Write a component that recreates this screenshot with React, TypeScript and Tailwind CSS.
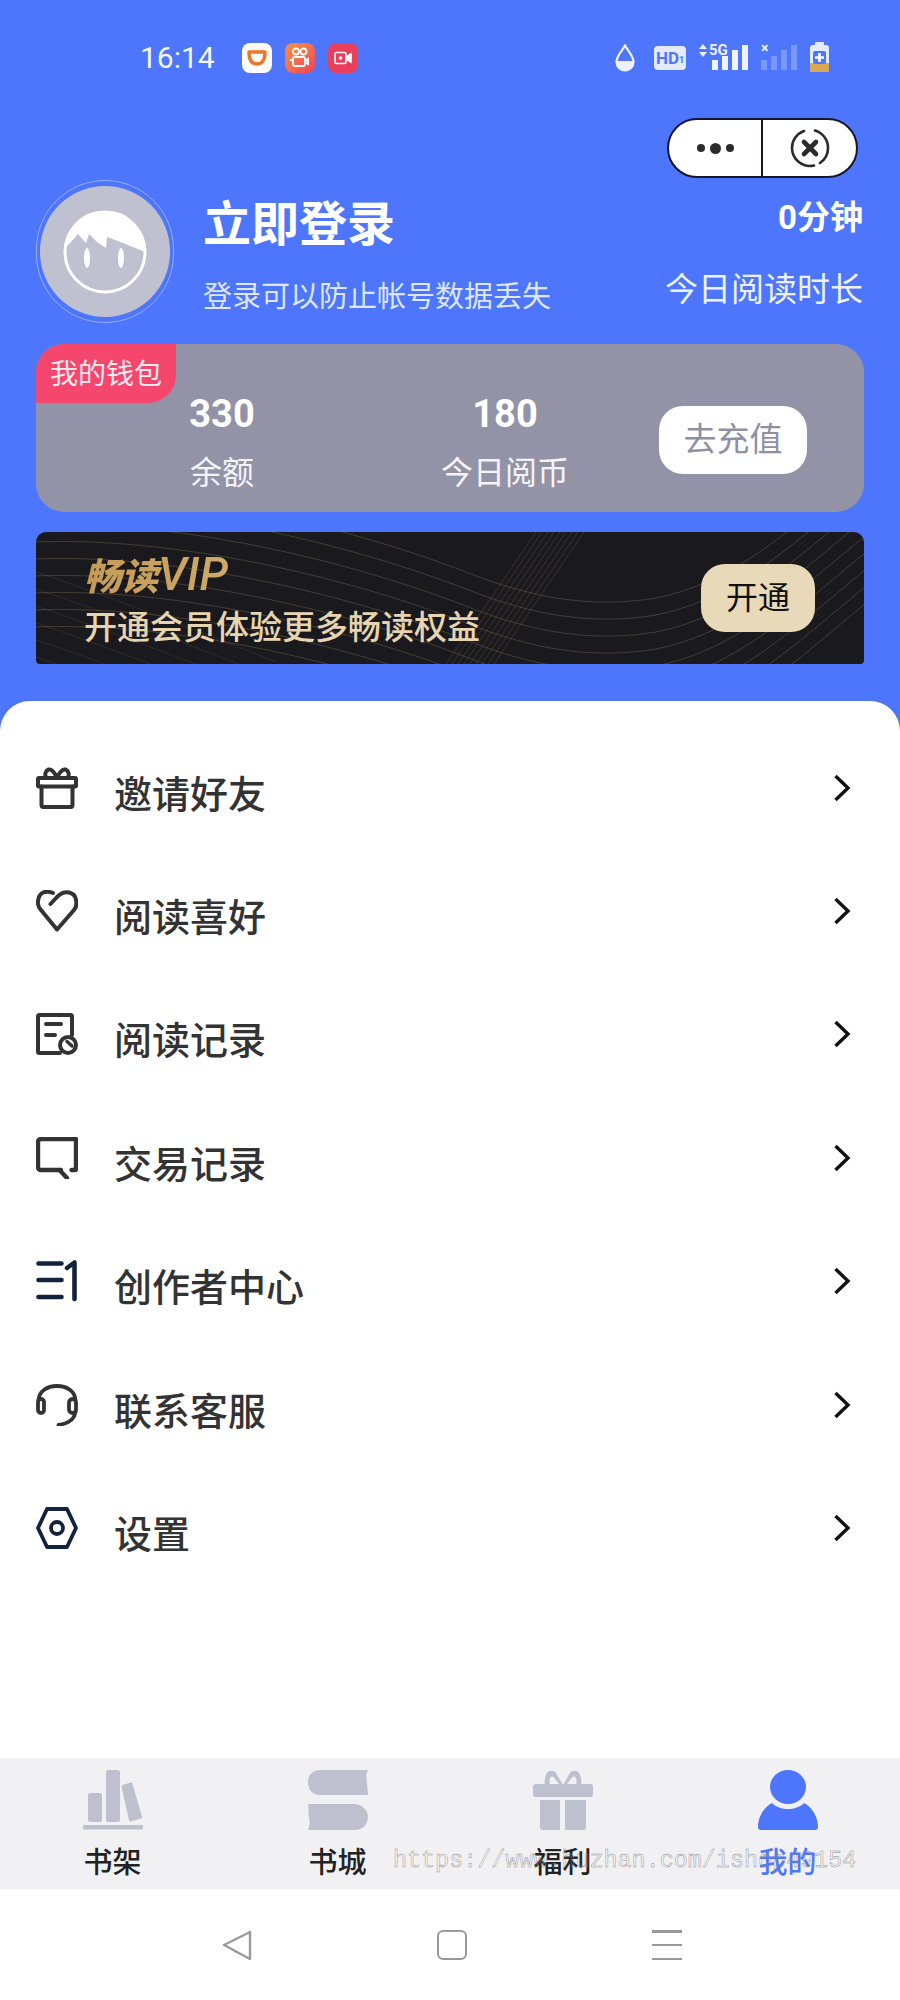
const tabs = [
  { label: "书架", icon: <ShelfIcon /> },
  { label: "书城", icon: <StoreIcon /> },
  { label: "福利", icon: <WelfareIcon /> },
  { label: "我的", icon: <MineIcon />, active: true },
];

const menu = [
  { label: "邀请好友", icon: <GiftIcon /> },
  { label: "阅读喜好", icon: <HeartIcon /> },
  { label: "阅读记录", icon: <RecordIcon /> },
  { label: "交易记录", icon: <ChatIcon /> },
  { label: "创作者中心", icon: <CreatorIcon /> },
  { label: "联系客服", icon: <HeadsetIcon /> },
  { label: "设置", icon: <SettingIcon /> },
];

function GiftIcon() {
  return (
    <svg width="42" height="42" viewBox="0 0 42 42" fill="none" stroke="#333" strokeWidth="4" strokeLinecap="round" strokeLinejoin="round">
      <rect x="2" y="11" width="38" height="8.500" rx="1" />
      <path d="M5.500 19.500V38a2 2 0 0 0 2 2h27a2 2 0 0 0 2-2V19.500" />
      <path d="M10 10.500c-1.500-3-.5-7 2.500-8 3-.8 6 3 8.500 8 2.500-5 5.500-8.800 8.500-8 3 1 4 5 2.500 8" />
    </svg>
  );
}

function HeartIcon() {
  return (
    <svg width="42" height="42" viewBox="0 0 42 42" fill="none" stroke="#333" strokeWidth="4" strokeLinecap="round" strokeLinejoin="round">
      <path d="M17 3C10 0 3 2 2 11c-.5 4 1 7 3 9l16 19.500L38 20c2-2 3-5 2-10C39 2 29-1 21 7l-6.500 7" />
    </svg>
  );
}

function RecordIcon() {
  return (
    <svg width="42" height="42" viewBox="0 0 42 42" fill="none" stroke="#333" strokeWidth="4" strokeLinecap="round" strokeLinejoin="round">
      <path d="M24 40H3.500A1.500 1.500 0 0 1 2 38.500v-35A1.500 1.500 0 0 1 3.500 2h31A1.500 1.500 0 0 1 36 3.500V22" />
      <path d="M10 11h15M10 22h9" />
      <circle cx="32" cy="32" r="8" fill="#fff" />
      <path d="M31 28.500 36 33" strokeWidth="3.400" />
    </svg>
  );
}

function ChatIcon() {
  return (
    <svg width="42" height="42" viewBox="0 0 42 42" fill="none" stroke="#333" strokeWidth="4.400" strokeLinecap="round" strokeLinejoin="round">
      <path d="M25 33H5a3 3 0 0 1-3-3V5a3 3 0 0 1 3-3h34.500a.5.500 0 0 1 .5.500V32a1 1 0 0 1-1 1h-3.500" />
      <path d="M23.500 33 31 41" />
    </svg>
  );
}

function CreatorIcon() {
  return (
    <svg width="42" height="42" viewBox="0 0 42 42" fill="none" stroke="#14233c" strokeWidth="4.600" strokeLinecap="round" strokeLinejoin="round">
      <path d="M2.500 3.500h23M2.500 20h23M2.500 37h23" />
      <path d="M31 8 38.500 2.500V39" />
    </svg>
  );
}

function HeadsetIcon() {
  return (
    <svg width="42" height="42" viewBox="0 0 42 42" fill="none" stroke="#333" strokeWidth="3.800" strokeLinecap="round" strokeLinejoin="round">
      <path d="M2.500 16C3 7.500 11 2 21 2s18 5.500 18.500 14" />
      <rect x="2" y="15" width="6" height="14" rx="3" />
      <rect x="33" y="15" width="7" height="14" rx="3.500" />
      <path d="M39.500 28c-1 7-7 11.500-17 13" />
    </svg>
  );
}

function SettingIcon() {
  return (
    <svg width="42" height="42" viewBox="0 0 42 42" fill="none" stroke="#14233c" strokeWidth="3.800" strokeLinecap="round" strokeLinejoin="round">
      <path d="M11 2h20l9 19-9 19H11L2 21 11 2Z" />
      <circle cx="21" cy="21" r="6" />
    </svg>
  );
}

function ShelfIcon() {
  return (
    <svg width="60" height="60" viewBox="0 0 60 60" fill="#bfc0cf">
      <rect x="0" y="55" width="60" height="4.500" rx="1" />
      <rect x="5" y="23" width="14" height="29" rx="2.500" />
      <rect x="23" y="0" width="14" height="52" rx="2.500" />
      <path d="M40 16.500 48 14l9.500 33-10 3-7.500-33.500Z" stroke="#bfc0cf" strokeWidth="3" strokeLinejoin="round" />
    </svg>
  );
}

function StoreIcon() {
  return (
    <svg width="60" height="60" viewBox="0 0 60 60" fill="#bfc0cf">
      <path d="M12 0h48c-2 4-2 8-1 12l1 13H12C4 25 0 19 0 12S5 0 12 0Z" />
      <path d="M0 34h46c8 0 14 6 14 13s-5 13-13 13H0c2-4 2-9 1-13s0-9-1-13Z" />
    </svg>
  );
}

function WelfareIcon() {
  return (
    <svg width="60" height="60" viewBox="0 0 60 60" fill="#bfc0cf">
      <path d="M30 15 23 3c-2-3-7-3-9 0s-3 9-2 12h5c-1-3-.5-7 1-8s3 0 4 2l5 6h6Zm0 0 7-12c2-3 7-3 9 0s3 9 2 12h-5c1-3 .5-7-1-8s-3 0-4 2l-5 6h-3Z" />
      <rect x="0" y="14" width="60" height="13" rx="3" />
      <path d="M7 30h20v30H10a3 3 0 0 1-3-3V30Z" />
      <path d="M32 30h21v27a3 3 0 0 1-3 3H32V30Z" />
    </svg>
  );
}

function MineIcon() {
  return (
    <svg width="60" height="60" viewBox="0 0 60 60" fill="#4d76fd">
      <ellipse cx="30" cy="17" rx="18" ry="17" />
      <path d="M14 33c4 4 10 6 16 6s12-2 16-6c8 4 14 14 14 24a3 3 0 0 1-3 3H3a3 3 0 0 1-3-3c0-10 6-20 14-24Z" />
    </svg>
  );
}

function Signal({ dim }: { dim?: boolean }) {
  const cls = dim ? "bg-white/25" : "bg-[#eef2ff]";
  return (
    <div className="flex h-[25px] items-end gap-[4px]">
      <div className={`h-[10px] w-[6px] ${cls}`} />
      <div className={`h-[14px] w-[6px] ${cls}`} />
      <div className={`h-[20px] w-[6px] ${cls}`} />
      <div className={`h-[25px] w-[6px] ${cls}`} />
    </div>
  );
}

function StatusBar() {
  return (
    <div className="flex h-[118px] items-start pt-[43px] pl-[140px] pr-[71px]">
      <span className="w-[78px] text-[30px] leading-[30px] text-[#f4f7ff]">16:14</span>
      <div className="ml-[24px] flex gap-[13px]">
        <div className="flex h-[30px] w-[30px] items-center justify-center rounded-[8px] bg-[#fdfcf8]">
          <svg width="20" height="16" viewBox="0 0 20 16" fill="none">
            <path d="M2 2h16c0 8-3 12-8 12S2 10 2 2Z" stroke="#e8782a" strokeWidth="3.400" strokeLinejoin="round" />
          </svg>
        </div>
        <div className="flex h-[30px] w-[30px] items-center justify-center rounded-[8px] bg-gradient-to-br from-[#f59236] to-[#ee3f5d]">
          <svg width="20" height="22" viewBox="0 0 20 22" fill="none" stroke="#fff" strokeWidth="1.800">
            <circle cx="6" cy="4.500" r="3" />
            <circle cx="13.500" cy="4.500" r="3" />
            <rect x="3" y="10" width="12" height="9" rx="2" />
            <path d="M15 14l3-2v5l-3-2M0 13h3" />
          </svg>
        </div>
        <div className="flex h-[30px] w-[30px] items-center justify-center rounded-[8px] bg-[#e93f5a]">
          <svg width="18" height="14" viewBox="0 0 18 14" fill="none" stroke="#fff" strokeWidth="1.600">
            <rect x="1" y="1.500" width="11" height="11" rx="1.500" />
            <path d="M12 6l5-3v8l-5-3" fill="#fff" />
            <circle cx="6.500" cy="7" r="1" fill="#fff" />
          </svg>
        </div>
      </div>
      <div className="ml-auto flex items-start">
        <svg width="20" height="28" viewBox="0 0 20 28" className="mt-[1px]">
          <path d="M10 1.500C7 7 1.500 12 1.500 18a8.500 8.500 0 0 0 17 0C18.500 12 13 7 10 1.500Z" fill="none" stroke="#eef2ff" strokeWidth="2.200" />
          <path d="M1.500 17h17a8.500 9.500 0 0 1-17 0Z" fill="#eef2ff" />
        </svg>
        <div className="ml-[19px] mt-[3px] flex h-[24px] w-[32px] items-center justify-center rounded-[4px] bg-[#e4eaff] text-[17px] leading-none font-bold text-[#4d76fd]">
          HD<span className="mt-[4px] text-[9px]">1</span>
        </div>
        <div className="relative ml-[13px] h-[27px] w-[49px]">
          <svg width="8" height="13" viewBox="0 0 8 13" className="absolute top-[1px] left-0" fill="#eef2ff">
            <path d="M4 0l4 5H0ZM4 13l4-5H0Z" />
          </svg>
          <span className="absolute top-[-1px] left-[10px] text-[15px] leading-[16px] font-bold text-[#eef2ff]">5G</span>
          <div className="absolute right-0 bottom-0">
            <Signal />
          </div>
        </div>
        <div className="relative ml-[13px] h-[27px] w-[36px]">
          <span className="absolute top-[-3px] left-0 text-[14px] leading-[16px] font-bold text-[#eef2ff]">×</span>
          <div className="absolute right-0 bottom-0">
            <Signal dim />
          </div>
        </div>
        <div className="relative ml-[13px] mt-[-1px] h-[30px] w-[19px]">
          <div className="mx-auto h-[3px] w-[9px] rounded-t-[1px] bg-[#e4eaff]" />
          <div className="flex h-[27px] w-[19px] flex-col justify-end overflow-hidden rounded-[3px] bg-[#e4eaff]">
            <div className="h-[9px] bg-[#d9a850]" />
          </div>
          <div className="absolute top-[9px] left-[3px] flex h-[13px] w-[13px] items-center justify-center rounded-[2px] bg-[#4d76fd]">
            <svg width="9" height="9" viewBox="0 0 9 9" fill="none" stroke="#fff" strokeWidth="2.600">
              <path d="M4.500 0v9M0 4.500h9" />
            </svg>
          </div>
        </div>
      </div>
    </div>
  );
}

function Capsule() {
  return (
    <div className="flex justify-end pr-[42px]">
      <div className="flex h-[60px] w-[191px] rounded-full border-2 border-[#16172e] bg-white">
        <div className="flex w-[94px] items-center justify-center gap-[5px] border-r-2 border-[#16172e]">
          <span className="h-[8px] w-[8px] rounded-full bg-[#2b2b2b]" />
          <span className="h-[11px] w-[11px] rounded-full bg-[#2b2b2b]" />
          <span className="h-[8px] w-[8px] rounded-full bg-[#2b2b2b]" />
        </div>
        <div className="flex flex-1 items-center justify-center">
          <svg width="40" height="40" viewBox="0 0 40 40" fill="none" stroke="#2b2b2b" strokeLinecap="round">
            <path d="M25 2.500A18 18 0 0 1 38 20a18 18 0 0 1-8 15M24 37.500A18 18 0 0 1 2 20 18 18 0 0 1 14 3" strokeWidth="2.600" />
            <path d="M14 14l12 12M26 14 14 26" strokeWidth="4.600" />
          </svg>
        </div>
      </div>
    </div>
  );
}

function Avatar() {
  return (
    <div className="flex h-[143px] w-[138px] items-center justify-center rounded-full border border-white/40">
      <div className="flex h-[131px] w-[130px] items-center justify-center rounded-full bg-[#bfc0d0]">
        <svg width="84" height="84" viewBox="0 0 84 84">
          <circle cx="42" cy="42" r="40" fill="none" stroke="#fff" strokeWidth="3" />
          <path d="M2 38C4 15 20 1 42 1s38 14 40 41L60 33 44 27l-1 11-9-6-8-8-3 9-8-9C10 30 6 34 2 38Z" fill="#fff" />
          <ellipse cx="24" cy="48" rx="3" ry="10" fill="#fff" />
          <ellipse cx="58" cy="48" rx="3" ry="10" fill="#fff" />
        </svg>
      </div>
    </div>
  );
}

function Profile() {
  return (
    <div className="mt-[2px] flex h-[144px] items-start pr-[37px] pl-[36px]">
      <Avatar />
      <div className="ml-[29px] flex flex-col">
        <span className="mt-[20px] text-[48px] leading-[50px] font-bold text-white">立即登录</span>
        <span className="mt-[31px] text-[29px] leading-[32px] text-[#dfe6ff]">登录可以防止帐号数据丢失</span>
      </div>
      <div className="ml-auto flex flex-col items-end text-white">
        <span className="mt-[18px] text-[33px] leading-[40px] font-bold">0分钟</span>
        <span className="mt-[32px] text-[33px] leading-[40px] text-[#eef2ff]">今日阅读时长</span>
      </div>
    </div>
  );
}

function Wallet() {
  return (
    <div className="relative mx-[36px] mt-[20px] flex h-[168px] items-center rounded-[28px] bg-[#9293a6]">
      <div className="absolute top-0 left-0 flex h-[59px] w-[140px] items-center justify-center rounded-tl-[28px] rounded-br-[28px] bg-[#f5476e] pt-[3px] text-[28px] leading-none text-[#fde9ee]">
        我的钱包
      </div>
      <div className="ml-[122px] flex w-[128px] flex-col items-center pt-[30px] text-white">
        <span className="text-[38px] leading-[46px] font-bold">330</span>
        <span className="mt-[14px] text-[32px] leading-[44px] text-[#f4f4f8]">余额</span>
      </div>
      <div className="ml-[127px] flex w-[184px] flex-col items-center pt-[30px] text-white">
        <span className="text-[38px] leading-[46px] font-bold">180</span>
        <span className="mt-[14px] text-[32px] leading-[44px] text-[#f4f4f8]">今日阅币</span>
      </div>
      <div className="mt-[24px] ml-[62px] flex h-[68px] w-[148px] items-center justify-center rounded-[24px] bg-white text-[33px] text-[#8f90a3]">
        去充值
      </div>
    </div>
  );
}

function VipLines() {
  const offsets = Array.from({ length: 9 }, (_, i) => i * 17);
  const band = Array.from({ length: 9 }, (_, i) => i * 6);
  return (
    <svg className="absolute inset-0" width="828" height="132" viewBox="0 0 828 132" fill="none" stroke="#b09a6c" strokeOpacity=".28" strokeWidth="1">
      {offsets.map((o) => (
        <path key={o} d={`M-20 ${o - 40}C120 ${o - 50} 300 ${o - 10} 430 ${o + 40}C500 ${o + 68} 560 ${o + 76} 620 ${o + 66}C690 ${o + 52} 740 ${o + 10} 800 ${o - 40}S860 ${o - 90} 900 ${o - 120}`} />
      ))}
      {offsets.map((o) => (
        <path key={`l${o}`} d={`M0 ${o + 40}C60 ${o + 60} 140 ${o + 90} 240 ${o + 130}`} strokeOpacity=".14" />
      ))}
      {band.map((o) => (
        <path key={`b${o}`} d={`M${500 + o} 0L${410 + o} 132`} strokeOpacity=".2" />
      ))}
    </svg>
  );
}

function VipBanner() {
  return (
    <div className="relative mx-[36px] mt-[20px] h-[132px] overflow-hidden rounded-t-[10px] rounded-b-[4px] bg-[#1a1a1e]">
      <VipLines />
      <div className="relative flex h-full items-start pr-[49px] pl-[48px]">
        <div className="flex flex-col">
          <span className="mt-[20px] bg-gradient-to-r from-[#c49a55] to-[#e2c58c] bg-clip-text text-[37px] leading-[44px] font-black text-transparent italic">
            畅读<span className="text-[46px] font-medium">VIP</span>
          </span>
          <span className="mt-[8px] text-[33px] leading-[40px] font-medium text-[#e6d5b0]">开通会员体验更多畅读权益</span>
        </div>
        <div className="mt-[32px] ml-auto flex h-[68px] w-[114px] items-center justify-center rounded-[24px] bg-[#e8d9b8] text-[32px] text-[#111]">
          开通
        </div>
      </div>
    </div>
  );
}

function Menu() {
  return (
    <div className="mt-[37px] flex-1 rounded-t-[30px] bg-white pt-[25px]">
      {menu.map((item) => (
        <div key={item.label} className="flex h-[123.4px] items-center pr-[49px] pl-[36px]">
          <div className="h-[42px] w-[42px]">{item.icon}</div>
          <span className="mt-[14px] ml-[36px] text-[38px] leading-[48px] font-medium text-[#333]">{item.label}</span>
          <svg width="18" height="28" viewBox="0 0 18 28" fill="none" stroke="#111" strokeWidth="3.400" className="ml-auto">
            <path d="M2.500 2 15 14 2.500 26" />
          </svg>
        </div>
      ))}
    </div>
  );
}

function TabBar() {
  return (
    <div className="relative grid h-[131px] grid-cols-4 bg-[#f1f1f3] pt-[12px]">
      {tabs.map((tab) => (
        <div key={tab.label} className="flex flex-col items-center">
          {tab.icon}
          <span className={`mt-[18px] text-[29px] leading-[30px] font-medium ${tab.active ? "text-[#4d76fd]" : "text-[#222]"}`}>{tab.label}</span>
        </div>
      ))}
      <span className="absolute top-[88px] left-[393px] font-['Liberation_Mono',monospace] text-[23.400px] leading-[30px] whitespace-nowrap text-transparent [-webkit-text-stroke:0.4px_#8a8a8a]">
        https://www.huzhan.com/ishop49154
      </span>
    </div>
  );
}

function SystemNav() {
  return (
    <div className="flex h-[111px] items-start bg-white pt-[41px] pl-[222px]">
      <svg width="30" height="30" viewBox="0 0 30 30" fill="none" stroke="#9a9a9a" strokeWidth="2.400" strokeLinejoin="round">
        <path d="M28 2 2 15l26 14V2Z" />
      </svg>
      <div className="ml-[185px] h-[30px] w-[30px] rounded-[6px] border-[2.500px] border-[#9a9a9a]" />
      <div className="ml-[185px] flex h-[30px] w-[30px] flex-col justify-between">
        <div className="h-[2.500px] bg-[#9a9a9a]" />
        <div className="h-[2.500px] bg-[#9a9a9a]" />
        <div className="h-[2.500px] bg-[#9a9a9a]" />
      </div>
    </div>
  );
}

export default function App() {
  return (
    <div className="flex h-[2000px] w-[900px] flex-col overflow-hidden bg-[#4d76fd] font-[Roboto,'Noto_Sans_CJK_SC',sans-serif]">
      <StatusBar />
      <Capsule />
      <Profile />
      <Wallet />
      <VipBanner />
      <Menu />
      <TabBar />
      <SystemNav />
    </div>
  );
}
